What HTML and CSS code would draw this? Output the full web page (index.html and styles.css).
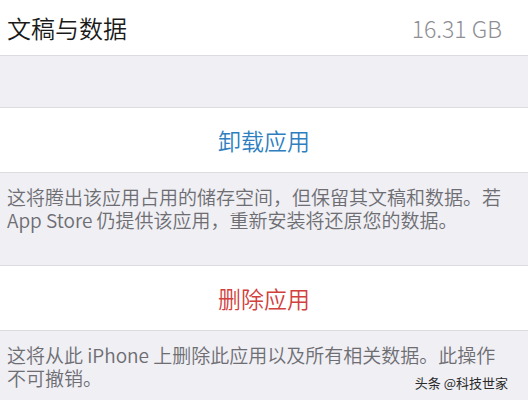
FILE: index.html
```html
<!DOCTYPE html>
<html lang="zh-CN">
<head>
    <meta charset="UTF-8">
    <meta name="viewport" content="width=device-width, initial-scale=1.0">
    <title>文稿与数据</title>
    <link rel="stylesheet" href="styles.css">
</head>
<body>
    <div class="settings">
        <div class="row">
            <span class="label">文稿与数据</span>
            <span class="value">16.31 GB</span>
        </div>
        <div class="spacer"></div>
        <div class="action blue">卸载应用</div>
        <div class="note">这将腾出该应用占用的储存空间，但保留其文稿和数据。若 App Store 仍提供该应用，重新安装将还原您的数据。</div>
        <div class="action red">删除应用</div>
        <div class="note last">这将从此 iPhone 上删除此应用以及所有相关数据。此操作不可撤销。<span class="watermark">头条 @科技世家</span></div>
    </div>
</body>
</html>
```

FILE: styles.css
```css
body {
    margin: 0;
    font-family: 'Noto Sans CJK SC', 'Noto Sans', sans-serif;
    font-weight: 350;
    background-color: #efeff4;
}

.settings {
    width: 528px;
    height: 400px;
    overflow: hidden;
    background-color: #efeff4;
}

.row {
    display: flex;
    justify-content: space-between;
    align-items: center;
    height: 55px;
    padding: 0 26px 0 7px;
    background-color: #fff;
    border-bottom: 1px solid #dcdce0;
}

.label {
    font-size: 24px;
    color: #1a1a1a;
}

.value {
    font-size: 23px;
    font-weight: 300;
    color: #8e8e93;
}

.spacer {
    height: 51px;
    border-bottom: 1px solid #dcdce0;
}

.action {
    height: 64px;
    line-height: 64px;
    text-align: center;
    font-size: 23px;
    background-color: #fff;
    border-bottom: 1px solid #dcdce0;
}

.blue {
    color: #2f7fc0;
}

.red {
    color: #d2403d;
}

.note {
    box-sizing: border-box;
    height: 93px;
    padding: 12px 20px 0 7px;
    font-size: 19px;
    line-height: 23px;
    color: #6d6d72;
    border-bottom: 1px solid #dcdce0;
}

.note.last {
    border-bottom: none;
}

.watermark {
    float: right;
    margin: 10px 0 0 0;
    font-size: 13px;
    line-height: 14px;
    font-weight: 400;
    color: #2a2a2a;
}
```
